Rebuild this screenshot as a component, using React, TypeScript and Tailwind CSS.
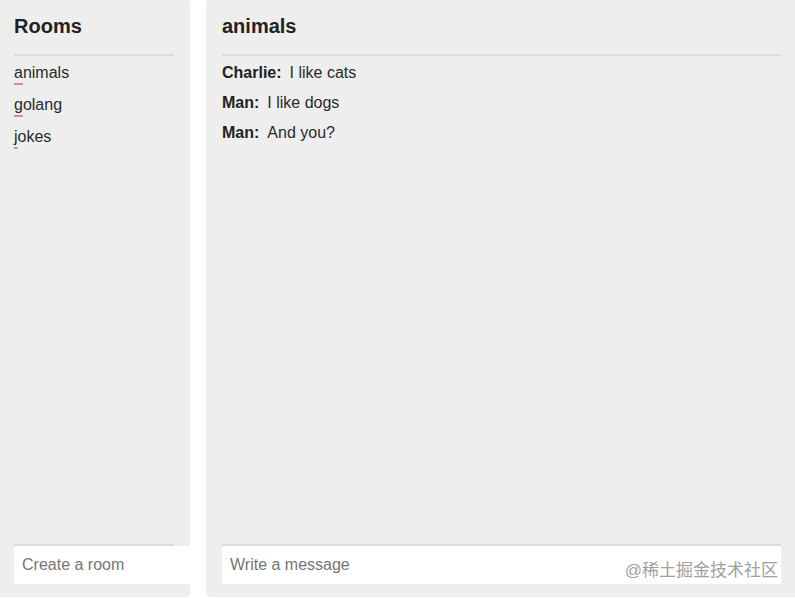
import React from 'react';

const rooms = ['animals', 'golang', 'jokes'];

const messages = [
  { author: 'Charlie', text: 'I like cats' },
  { author: 'Man', text: 'I like dogs' },
  { author: 'Man', text: 'And you?' },
];

function RoomName({ name }: { name: string }) {
  // spellcheck squiggle under the first letter
  return (
    <span>
      <span className="underline decoration-[#e08a84] decoration-[1.5px] underline-offset-[5px]">{name[0]}</span>
      {name.slice(1)}
    </span>
  );
}

export default function App() {
  return (
    <div
      className="relative flex h-[598px] w-[795px] gap-4 overflow-hidden bg-white text-[#222]"
      style={{ fontFamily: '"Liberation Sans", Arial, sans-serif' }}
    >
      {/* Rooms sidebar */}
      <div className="flex h-[597px] w-[190px] shrink-0 flex-col overflow-hidden rounded-r bg-[#eeeeee] pl-[14px] pr-4 pb-[13px]">
        <h2 className="pt-3 text-xl leading-7 font-bold">Rooms</h2>
        <div className="mt-[14px] border-t-2 border-[#dcdcdc]" />
        <ul className="flex-1 text-[#2a2a2a]">
          {rooms.map((room) => (
            <li key={room} className="h-8 pt-px text-base leading-8">
              <RoomName name={room} />
            </li>
          ))}
        </ul>
        <div className="w-[160px] border-t-2 border-[#dcdcdc]">
          <input
            className="block h-[38px] w-[176px] bg-white px-2 text-base text-[#222] outline-none placeholder:text-[#757575]"
            placeholder="Create a room"
          />
        </div>
      </div>

      {/* Chat area */}
      <div className="flex h-[597px] flex-1 flex-col overflow-hidden rounded-l bg-[#eeeeee] pl-4 pr-[14px] pb-[13px]">
        <h2 className="pt-3 text-xl leading-7 font-bold">animals</h2>
        <div className="mt-[14px] border-t-2 border-[#dcdcdc]" />
        <div className="mt-[2px] flex-1">
          {messages.map((m, i) => (
            <div key={i} className="h-[30px] text-base leading-[30px]">
              <span className="mr-2 font-bold">{m.author}:</span>
              <span className="text-[#2a2a2a]">{m.text}</span>
            </div>
          ))}
        </div>
        <div className="border-t-2 border-[#dcdcdc]">
          <input
            autoFocus
            className="block h-[38px] w-full bg-white px-2 text-base text-[#222] caret-black outline-none placeholder:text-[#757575]"
            placeholder="Write a message"
          />
        </div>
      </div>

      {/* watermark */}
      <div
        className="pointer-events-none absolute right-[17px] bottom-[19px] text-[17px] leading-none text-[#a0a0a0]"
        style={{ fontFamily: '"Liberation Sans", "Noto Sans CJK SC", sans-serif' }}
      >
        @稀土掘金技术社区
      </div>
    </div>
  );
}
